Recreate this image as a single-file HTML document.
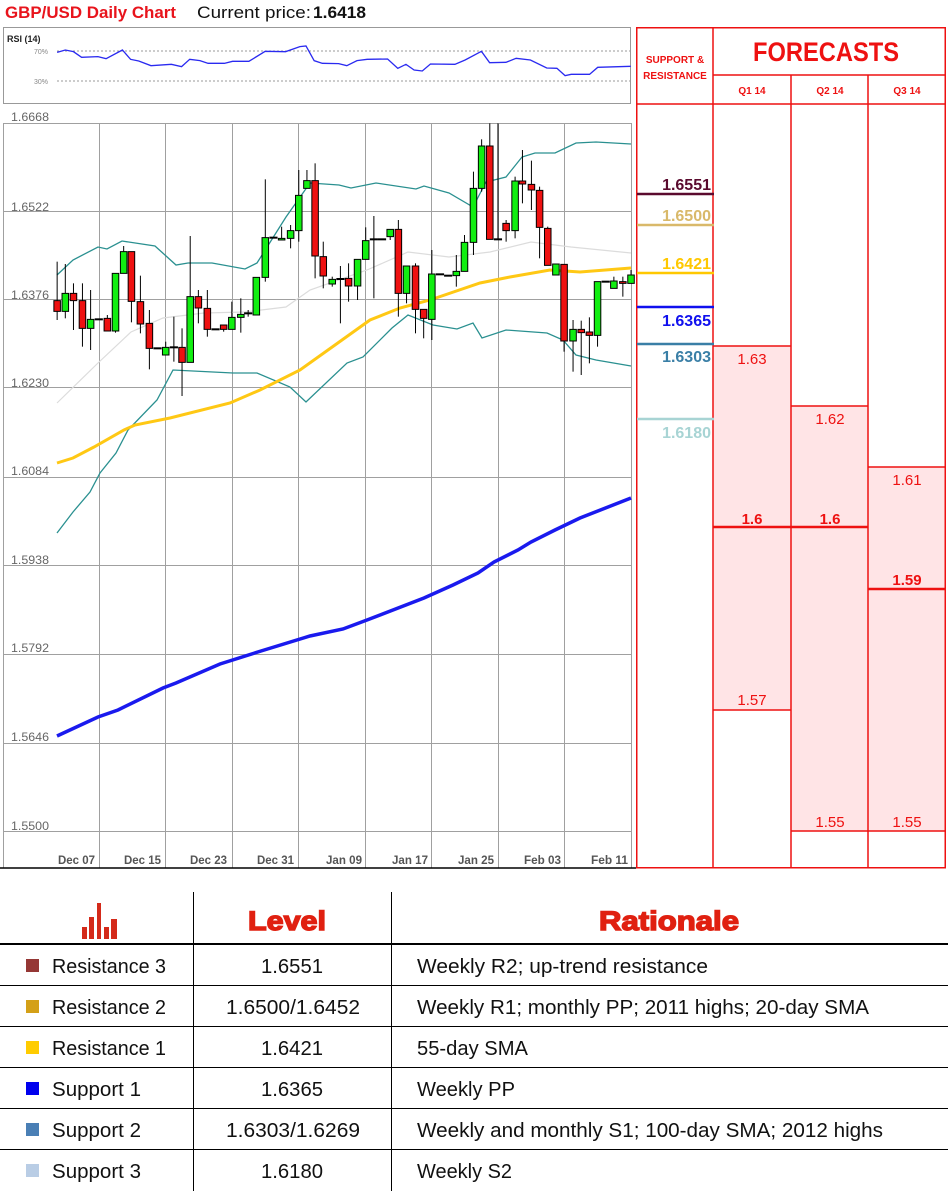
<!DOCTYPE html>
<html><head><meta charset="utf-8"><style>
html,body{margin:0;padding:0;background:#fff;}
svg{display:block;font-family:"Liberation Sans",sans-serif;}
</style></head><body>
<svg width="948" height="1191" viewBox="0 0 948 1191" xmlns="http://www.w3.org/2000/svg">
<rect width="948" height="1191" fill="#fff"/>
<!-- title -->
<text x="5" y="18" font-size="17" font-weight="bold" fill="#e8141c" textLength="171" lengthAdjust="spacingAndGlyphs">GBP/USD Daily Chart</text>
<text x="197" y="18" font-size="17" fill="#111" textLength="114" lengthAdjust="spacingAndGlyphs">Current price:</text>
<text x="313" y="18" font-size="17" font-weight="bold" fill="#111" textLength="53" lengthAdjust="spacingAndGlyphs">1.6418</text>

<!-- RSI panel -->
<rect x="3.5" y="27.5" width="627" height="76" fill="#fff" stroke="#999"/>
<text x="7" y="42" font-size="9" font-weight="bold" fill="#222">RSI (14)</text>
<text x="34" y="54" font-size="7" fill="#888">70%</text>
<text x="34" y="84" font-size="7" fill="#888">30%</text>
<line x1="57" y1="51" x2="630" y2="51" stroke="#777" stroke-dasharray="2,2" stroke-width="0.8"/>
<line x1="57" y1="81" x2="630" y2="81" stroke="#777" stroke-dasharray="2,2" stroke-width="0.8"/>
<g transform="scale(0.408,0.3333)">
<polyline fill="none" stroke="#2a2af0" stroke-width="1.3" vector-effect="non-scaling-stroke" points="140,157 160,150 180,155 200,172 240,170 260,176 300,150 320,178 340,183 370,197 420,193 445,200 465,178 490,182 510,190 550,190 570,184 610,184 650,154 700,155 735,140 750,138 770,182 790,190 830,191 850,197 875,182 900,178 950,177 975,205 995,193 1015,210 1035,213 1055,192 1115,193 1140,180 1180,154 1200,188 1240,187 1265,175 1300,180 1340,204 1365,205 1385,227 1400,223 1445,223 1465,202 1546,199"/>
</g>

<!-- main chart grid -->
<g stroke="#a0a0a0" stroke-width="1">
<line x1="3" y1="123.5" x2="631" y2="123.5"/>
<line x1="3" y1="211.5" x2="631" y2="211.5"/>
<line x1="3" y1="299.5" x2="631" y2="299.5"/>
<line x1="3" y1="387.5" x2="631" y2="387.5"/>
<line x1="3" y1="477.5" x2="631" y2="477.5"/>
<line x1="3" y1="565.5" x2="631" y2="565.5"/>
<line x1="3" y1="654.5" x2="631" y2="654.5"/>
<line x1="3" y1="743.5" x2="631" y2="743.5"/>
<line x1="3" y1="831.5" x2="631" y2="831.5"/>
<line x1="99.5" y1="123" x2="99.5" y2="868"/>
<line x1="165.5" y1="123" x2="165.5" y2="868"/>
<line x1="232.5" y1="123" x2="232.5" y2="868"/>
<line x1="298.5" y1="123" x2="298.5" y2="868"/>
<line x1="365.5" y1="123" x2="365.5" y2="868"/>
<line x1="431.5" y1="123" x2="431.5" y2="868"/>
<line x1="498.5" y1="123" x2="498.5" y2="868"/>
<line x1="564.5" y1="123" x2="564.5" y2="868"/>
<line x1="3.5" y1="123" x2="3.5" y2="868"/>
<line x1="631.5" y1="123" x2="631.5" y2="868"/>
</g>
<g font-size="12" fill="#666">
<text x="11" y="121" textLength="38" lengthAdjust="spacingAndGlyphs">1.6668</text>
<text x="11" y="211" textLength="38" lengthAdjust="spacingAndGlyphs">1.6522</text>
<text x="11" y="299" textLength="38" lengthAdjust="spacingAndGlyphs">1.6376</text>
<text x="11" y="387" textLength="38" lengthAdjust="spacingAndGlyphs">1.6230</text>
<text x="11" y="475" textLength="38" lengthAdjust="spacingAndGlyphs">1.6084</text>
<text x="11" y="564" textLength="38" lengthAdjust="spacingAndGlyphs">1.5938</text>
<text x="11" y="652" textLength="38" lengthAdjust="spacingAndGlyphs">1.5792</text>
<text x="11" y="741" textLength="38" lengthAdjust="spacingAndGlyphs">1.5646</text>
<text x="11" y="830" textLength="38" lengthAdjust="spacingAndGlyphs">1.5500</text>
</g>
<g font-size="12" font-weight="bold" fill="#555">
<text x="58" y="864" textLength="37" lengthAdjust="spacingAndGlyphs">Dec 07</text>
<text x="124" y="864" textLength="37" lengthAdjust="spacingAndGlyphs">Dec 15</text>
<text x="190" y="864" textLength="37" lengthAdjust="spacingAndGlyphs">Dec 23</text>
<text x="257" y="864" textLength="37" lengthAdjust="spacingAndGlyphs">Dec 31</text>
<text x="326" y="864" textLength="36" lengthAdjust="spacingAndGlyphs">Jan 09</text>
<text x="392" y="864" textLength="36" lengthAdjust="spacingAndGlyphs">Jan 17</text>
<text x="458" y="864" textLength="36" lengthAdjust="spacingAndGlyphs">Jan 25</text>
<text x="524" y="864" textLength="37" lengthAdjust="spacingAndGlyphs">Feb 03</text>
<text x="591" y="864" textLength="37" lengthAdjust="spacingAndGlyphs">Feb 11</text>
</g>
<line x1="0" y1="868" x2="636" y2="868" stroke="#000" stroke-width="1.5"/>

<!-- indicator lines -->
<polyline fill="none" stroke="#dcdcdc" stroke-width="1.2" points="57,403 98,363 131,332 163,318 204,313 245,312 286,307 310,290 367,270 408,252 449,257 490,252 531,242 571,247 631,253"/>
<polyline fill="none" stroke="#2a9090" stroke-width="1.3" points="57,275 73,260 98,247 107,249 122,241 155,246 176,265 188,263 212,263 245,269 257,263 286,217 310,183 339,185 351,188 376,183 416,189 424,186 449,193 473,207 486,182 506,177 522,157 535,153 555,153 576,143 596,142 631,144"/>
<polyline fill="none" stroke="#2a9090" stroke-width="1.3" points="57,533 73,512 90,492 100,473 116,453 128,430 157,400 173,370 233,373 257,373 290,387 306,402 347,363 363,357 392,328 408,315 433,325 457,329 473,323 482,338 506,330 547,333 563,340 576,355 596,360 631,366"/>
<polyline fill="none" stroke="#ffc814" stroke-width="3" points="57,463 73,458 94,447 124,430 135,425 170,418 230,403 260,390 300,370 335,345 370,320 400,308 430,300 480,283 510,277 550,270 580,272 631,268"/>
<polyline fill="none" stroke="#1a1aee" stroke-width="3.5" points="57,736 98,717 118,710 163,688 176,683 220,664 261,651 310,636 343,629 367,620 424,598 453,585 478,573 494,562 518,550 531,542 555,530 580,518 631,498"/>

<!-- candles (zoom coords) -->
<g transform="translate(0,110) scale(0.40816,0.33333)" stroke="#000">
<g stroke-width="1" fill="none">
<line x1="140" y1="455" x2="140" y2="630" vector-effect="non-scaling-stroke"/>
<line x1="160" y1="462" x2="160" y2="625" vector-effect="non-scaling-stroke"/>
<line x1="180" y1="520" x2="180" y2="660" vector-effect="non-scaling-stroke"/>
<line x1="202" y1="520" x2="202" y2="710" vector-effect="non-scaling-stroke"/>
<line x1="222" y1="540" x2="222" y2="720" vector-effect="non-scaling-stroke"/>
<line x1="263" y1="615" x2="263" y2="663" vector-effect="non-scaling-stroke"/>
<line x1="283" y1="490" x2="283" y2="668" vector-effect="non-scaling-stroke"/>
<line x1="303" y1="408" x2="303" y2="490" vector-effect="non-scaling-stroke"/>
<line x1="322" y1="425" x2="322" y2="637" vector-effect="non-scaling-stroke"/>
<line x1="344" y1="497" x2="344" y2="670" vector-effect="non-scaling-stroke"/>
<line x1="366" y1="600" x2="366" y2="778" vector-effect="non-scaling-stroke"/>
<line x1="406" y1="695" x2="406" y2="735" vector-effect="non-scaling-stroke"/>
<line x1="426" y1="620" x2="426" y2="755" vector-effect="non-scaling-stroke"/>
<line x1="446" y1="655" x2="446" y2="858" vector-effect="non-scaling-stroke"/>
<line x1="466" y1="378" x2="466" y2="757" vector-effect="non-scaling-stroke"/>
<line x1="486" y1="540" x2="486" y2="640" vector-effect="non-scaling-stroke"/>
<line x1="508" y1="540" x2="508" y2="680" vector-effect="non-scaling-stroke"/>
<line x1="548" y1="645" x2="548" y2="665" vector-effect="non-scaling-stroke"/>
<line x1="568" y1="575" x2="568" y2="658" vector-effect="non-scaling-stroke"/>
<line x1="590" y1="565" x2="590" y2="668" vector-effect="non-scaling-stroke"/>
<line x1="608" y1="600" x2="608" y2="620" vector-effect="non-scaling-stroke"/>
<line x1="628" y1="502" x2="628" y2="615" vector-effect="non-scaling-stroke"/>
<line x1="650" y1="208" x2="650" y2="515" vector-effect="non-scaling-stroke"/>
<line x1="690" y1="350" x2="690" y2="390" vector-effect="non-scaling-stroke"/>
<line x1="712" y1="345" x2="712" y2="415" vector-effect="non-scaling-stroke"/>
<line x1="732" y1="180" x2="732" y2="395" vector-effect="non-scaling-stroke"/>
<line x1="752" y1="180" x2="752" y2="235" vector-effect="non-scaling-stroke"/>
<line x1="772" y1="160" x2="772" y2="505" vector-effect="non-scaling-stroke"/>
<line x1="792" y1="395" x2="792" y2="535" vector-effect="non-scaling-stroke"/>
<line x1="814" y1="500" x2="814" y2="530" vector-effect="non-scaling-stroke"/>
<line x1="834" y1="468" x2="834" y2="640" vector-effect="non-scaling-stroke"/>
<line x1="854" y1="460" x2="854" y2="575" vector-effect="non-scaling-stroke"/>
<line x1="876" y1="448" x2="876" y2="570" vector-effect="non-scaling-stroke"/>
<line x1="896" y1="352" x2="896" y2="448" vector-effect="non-scaling-stroke"/>
<line x1="916" y1="318" x2="916" y2="565" vector-effect="non-scaling-stroke"/>
<line x1="956" y1="358" x2="956" y2="390" vector-effect="non-scaling-stroke"/>
<line x1="976" y1="330" x2="976" y2="620" vector-effect="non-scaling-stroke"/>
<line x1="996" y1="468" x2="996" y2="580" vector-effect="non-scaling-stroke"/>
<line x1="1018" y1="460" x2="1018" y2="670" vector-effect="non-scaling-stroke"/>
<line x1="1038" y1="598" x2="1038" y2="685" vector-effect="non-scaling-stroke"/>
<line x1="1058" y1="420" x2="1058" y2="690" vector-effect="non-scaling-stroke"/>
<line x1="1118" y1="435" x2="1118" y2="530" vector-effect="non-scaling-stroke"/>
<line x1="1138" y1="375" x2="1138" y2="484" vector-effect="non-scaling-stroke"/>
<line x1="1160" y1="185" x2="1160" y2="435" vector-effect="non-scaling-stroke"/>
<line x1="1180" y1="88" x2="1180" y2="245" vector-effect="non-scaling-stroke"/>
<line x1="1200" y1="40" x2="1200" y2="388" vector-effect="non-scaling-stroke"/>
<line x1="1220" y1="40" x2="1220" y2="388" vector-effect="non-scaling-stroke"/>
<line x1="1240" y1="330" x2="1240" y2="395" vector-effect="non-scaling-stroke"/>
<line x1="1262" y1="200" x2="1262" y2="385" vector-effect="non-scaling-stroke"/>
<line x1="1280" y1="120" x2="1280" y2="280" vector-effect="non-scaling-stroke"/>
<line x1="1302" y1="152" x2="1302" y2="300" vector-effect="non-scaling-stroke"/>
<line x1="1322" y1="230" x2="1322" y2="445" vector-effect="non-scaling-stroke"/>
<line x1="1342" y1="350" x2="1342" y2="466" vector-effect="non-scaling-stroke"/>
<line x1="1382" y1="463" x2="1382" y2="725" vector-effect="non-scaling-stroke"/>
<line x1="1404" y1="630" x2="1404" y2="785" vector-effect="non-scaling-stroke"/>
<line x1="1424" y1="632" x2="1424" y2="795" vector-effect="non-scaling-stroke"/>
<line x1="1444" y1="622" x2="1444" y2="760" vector-effect="non-scaling-stroke"/>
<line x1="1464" y1="515" x2="1464" y2="710" vector-effect="non-scaling-stroke"/>
<line x1="1504" y1="500" x2="1504" y2="535" vector-effect="non-scaling-stroke"/>
<line x1="1526" y1="500" x2="1526" y2="560" vector-effect="non-scaling-stroke"/>
<line x1="1546" y1="480" x2="1546" y2="520" vector-effect="non-scaling-stroke"/>
<line x1="232" y1="628" x2="252" y2="628" vector-effect="non-scaling-stroke" stroke-width="2"/>
<line x1="376" y1="715" x2="396" y2="715" vector-effect="non-scaling-stroke" stroke-width="2"/>
<line x1="416" y1="712" x2="436" y2="712" vector-effect="non-scaling-stroke" stroke-width="2"/>
<line x1="518" y1="658" x2="538" y2="658" vector-effect="non-scaling-stroke" stroke-width="2"/>
<line x1="598" y1="610" x2="618" y2="610" vector-effect="non-scaling-stroke" stroke-width="2"/>
<line x1="660" y1="383" x2="680" y2="383" vector-effect="non-scaling-stroke" stroke-width="2"/>
<line x1="824" y1="507" x2="844" y2="507" vector-effect="non-scaling-stroke" stroke-width="2"/>
<line x1="906" y1="388" x2="926" y2="388" vector-effect="non-scaling-stroke" stroke-width="2"/>
<line x1="926" y1="388" x2="946" y2="388" vector-effect="non-scaling-stroke" stroke-width="2"/>
<line x1="1068" y1="493" x2="1088" y2="493" vector-effect="non-scaling-stroke" stroke-width="2"/>
<line x1="1088" y1="497" x2="1108" y2="497" vector-effect="non-scaling-stroke" stroke-width="2"/>
<line x1="1210" y1="388" x2="1230" y2="388" vector-effect="non-scaling-stroke" stroke-width="2"/>
<line x1="1474" y1="515" x2="1494" y2="515" vector-effect="non-scaling-stroke" stroke-width="2"/>
</g>
<g fill="#ee1111">
<rect x="132" y="572" width="16" height="32" vector-effect="non-scaling-stroke"/>
<rect x="172" y="550" width="16" height="22" vector-effect="non-scaling-stroke"/>
<rect x="194" y="572" width="16" height="83" vector-effect="non-scaling-stroke"/>
<rect x="255" y="625" width="16" height="38" vector-effect="non-scaling-stroke"/>
<rect x="314" y="425" width="16" height="149" vector-effect="non-scaling-stroke"/>
<rect x="336" y="575" width="16" height="67" vector-effect="non-scaling-stroke"/>
<rect x="358" y="640" width="16" height="75" vector-effect="non-scaling-stroke"/>
<rect x="438" y="712" width="16" height="45" vector-effect="non-scaling-stroke"/>
<rect x="478" y="560" width="16" height="34" vector-effect="non-scaling-stroke"/>
<rect x="500" y="595" width="16" height="63" vector-effect="non-scaling-stroke"/>
<rect x="540" y="645" width="16" height="13" vector-effect="non-scaling-stroke"/>
<rect x="764" y="212" width="16" height="226" vector-effect="non-scaling-stroke"/>
<rect x="784" y="440" width="16" height="58" vector-effect="non-scaling-stroke"/>
<rect x="846" y="505" width="16" height="23" vector-effect="non-scaling-stroke"/>
<rect x="968" y="358" width="16" height="192" vector-effect="non-scaling-stroke"/>
<rect x="1010" y="468" width="16" height="130" vector-effect="non-scaling-stroke"/>
<rect x="1030" y="598" width="16" height="27" vector-effect="non-scaling-stroke"/>
<rect x="1192" y="108" width="16" height="280" vector-effect="non-scaling-stroke"/>
<rect x="1232" y="340" width="16" height="22" vector-effect="non-scaling-stroke"/>
<rect x="1272" y="213" width="16" height="9" vector-effect="non-scaling-stroke"/>
<rect x="1294" y="223" width="16" height="17" vector-effect="non-scaling-stroke"/>
<rect x="1314" y="241" width="16" height="111" vector-effect="non-scaling-stroke"/>
<rect x="1334" y="355" width="16" height="111" vector-effect="non-scaling-stroke"/>
<rect x="1374" y="463" width="16" height="230" vector-effect="non-scaling-stroke"/>
<rect x="1416" y="658" width="16" height="10" vector-effect="non-scaling-stroke"/>
<rect x="1436" y="666" width="16" height="10" vector-effect="non-scaling-stroke"/>
<rect x="1518" y="515" width="16" height="5" vector-effect="non-scaling-stroke"/>
</g>
<g fill="#11ee11">
<rect x="152" y="550" width="16" height="54" vector-effect="non-scaling-stroke"/>
<rect x="214" y="628" width="16" height="27" vector-effect="non-scaling-stroke"/>
<rect x="275" y="490" width="16" height="173" vector-effect="non-scaling-stroke"/>
<rect x="295" y="425" width="16" height="65" vector-effect="non-scaling-stroke"/>
<rect x="398" y="712" width="16" height="23" vector-effect="non-scaling-stroke"/>
<rect x="458" y="560" width="16" height="197" vector-effect="non-scaling-stroke"/>
<rect x="560" y="622" width="16" height="36" vector-effect="non-scaling-stroke"/>
<rect x="582" y="613" width="16" height="9" vector-effect="non-scaling-stroke"/>
<rect x="620" y="502" width="16" height="113" vector-effect="non-scaling-stroke"/>
<rect x="642" y="383" width="16" height="119" vector-effect="non-scaling-stroke"/>
<rect x="682" y="385" width="16" height="5" vector-effect="non-scaling-stroke"/>
<rect x="704" y="362" width="16" height="23" vector-effect="non-scaling-stroke"/>
<rect x="724" y="256" width="16" height="106" vector-effect="non-scaling-stroke"/>
<rect x="744" y="212" width="16" height="23" vector-effect="non-scaling-stroke"/>
<rect x="806" y="508" width="16" height="14" vector-effect="non-scaling-stroke"/>
<rect x="868" y="448" width="16" height="80" vector-effect="non-scaling-stroke"/>
<rect x="888" y="392" width="16" height="56" vector-effect="non-scaling-stroke"/>
<rect x="948" y="358" width="16" height="22" vector-effect="non-scaling-stroke"/>
<rect x="988" y="468" width="16" height="82" vector-effect="non-scaling-stroke"/>
<rect x="1050" y="492" width="16" height="136" vector-effect="non-scaling-stroke"/>
<rect x="1110" y="484" width="16" height="13" vector-effect="non-scaling-stroke"/>
<rect x="1130" y="397" width="16" height="87" vector-effect="non-scaling-stroke"/>
<rect x="1152" y="235" width="16" height="162" vector-effect="non-scaling-stroke"/>
<rect x="1172" y="108" width="16" height="127" vector-effect="non-scaling-stroke"/>
<rect x="1254" y="213" width="16" height="149" vector-effect="non-scaling-stroke"/>
<rect x="1354" y="462" width="16" height="33" vector-effect="non-scaling-stroke"/>
<rect x="1396" y="658" width="16" height="35" vector-effect="non-scaling-stroke"/>
<rect x="1456" y="515" width="16" height="161" vector-effect="non-scaling-stroke"/>
<rect x="1496" y="513" width="16" height="22" vector-effect="non-scaling-stroke"/>
<rect x="1538" y="495" width="16" height="25" vector-effect="non-scaling-stroke"/>
</g>
</g>

<!-- right forecast panel -->
<rect x="713" y="346" width="78" height="364" fill="#ffe4e6"/>
<rect x="791" y="406" width="77" height="425" fill="#ffe4e6"/>
<rect x="868" y="467" width="78" height="364" fill="#ffe4e6"/>
<g stroke="#ee1111" stroke-width="1.5" fill="none">
<rect x="636.75" y="27.75" width="308.5" height="840"/>
<line x1="713" y1="27" x2="713" y2="868"/>
<line x1="791" y1="75" x2="791" y2="868"/>
<line x1="868" y1="75" x2="868" y2="868"/>
<line x1="713" y1="75" x2="946" y2="75"/>
<line x1="636" y1="104" x2="946" y2="104"/>
<line x1="713" y1="346" x2="791" y2="346"/>
<line x1="713" y1="710" x2="791" y2="710"/>
<line x1="791" y1="406" x2="868" y2="406"/>
<line x1="868" y1="467" x2="946" y2="467"/>
<line x1="791" y1="831" x2="946" y2="831"/>
</g>
<line x1="713" y1="527" x2="868" y2="527" stroke="#ee1111" stroke-width="2.5"/>
<line x1="868" y1="589" x2="946" y2="589" stroke="#ee1111" stroke-width="2.5"/>
<text x="675" y="63" font-size="10" font-weight="bold" fill="#ee1111" text-anchor="middle">SUPPORT &amp;</text>
<text x="675" y="79" font-size="10" font-weight="bold" fill="#ee1111" text-anchor="middle">RESISTANCE</text>
<text x="826" y="61" font-size="27" font-weight="bold" fill="#ee1111" text-anchor="middle" textLength="146" lengthAdjust="spacingAndGlyphs">FORECASTS</text>
<g font-size="10" font-weight="bold" fill="#ee1111" text-anchor="middle">
<text x="752" y="94">Q1 14</text>
<text x="830" y="94">Q2 14</text>
<text x="907" y="94">Q3 14</text>
</g>
<g font-size="15" fill="#ee1111" text-anchor="middle">
<text x="752" y="364">1.63</text>
<text x="830" y="424">1.62</text>
<text x="907" y="485">1.61</text>
<text x="752" y="705">1.57</text>
<text x="830" y="827">1.55</text>
<text x="907" y="827">1.55</text>
</g>
<g font-size="15" font-weight="bold" fill="#ee1111" text-anchor="middle">
<text x="752" y="524">1.6</text>
<text x="830" y="524">1.6</text>
<text x="907" y="585">1.59</text>
</g>
<line x1="637" y1="194" x2="714" y2="194" stroke="#5a0a2e" stroke-width="2.5"/>
<line x1="637" y1="225" x2="714" y2="225" stroke="#d9b96a" stroke-width="2.5"/>
<line x1="637" y1="273" x2="714" y2="273" stroke="#ffc800" stroke-width="2.5"/>
<line x1="637" y1="307" x2="714" y2="307" stroke="#1010ee" stroke-width="2.5"/>
<line x1="637" y1="344" x2="714" y2="344" stroke="#3a7fa6" stroke-width="2.5"/>
<line x1="637" y1="419" x2="714" y2="419" stroke="#a8d4d4" stroke-width="2.5"/>
<g font-size="16" font-weight="bold" text-anchor="end">
<text x="711" y="190" fill="#5a0a2e">1.6551</text>
<text x="711" y="221" fill="#d9b96a">1.6500</text>
<text x="711" y="269" fill="#ffc800">1.6421</text>
<text x="711" y="326" fill="#1010ee">1.6365</text>
<text x="711" y="362" fill="#3a7fa6">1.6303</text>
<text x="711" y="438" fill="#a8d4d4">1.6180</text>
</g>

<!-- bottom table -->
<g stroke="#000" stroke-width="1">
<line x1="193.5" y1="892" x2="193.5" y2="1191"/>
<line x1="391.5" y1="892" x2="391.5" y2="1191"/>
<line x1="0" y1="985.5" x2="948" y2="985.5"/>
<line x1="0" y1="1026.5" x2="948" y2="1026.5"/>
<line x1="0" y1="1067.5" x2="948" y2="1067.5"/>
<line x1="0" y1="1108.5" x2="948" y2="1108.5"/>
<line x1="0" y1="1149.5" x2="948" y2="1149.5"/>
</g>
<line x1="0" y1="944" x2="948" y2="944" stroke="#000" stroke-width="2"/>
<g fill="#d42a1a">
<rect x="82" y="927" width="5" height="12"/>
<rect x="89" y="917" width="5" height="22"/>
<rect x="97" y="903" width="4" height="36"/>
<rect x="104" y="927" width="5" height="12"/>
<rect x="111" y="919" width="6" height="20"/>
</g>
<text x="287" y="930" font-size="27" font-weight="bold" fill="#e02010" text-anchor="middle" stroke="#e02010" stroke-width="1.4" textLength="78" lengthAdjust="spacingAndGlyphs">Level</text>
<text x="669" y="930" font-size="27" font-weight="bold" fill="#e02010" text-anchor="middle" stroke="#e02010" stroke-width="1.4" textLength="140" lengthAdjust="spacingAndGlyphs">Rationale</text>
<rect x="26" y="959" width="13" height="13" fill="#953735"/>
<rect x="26" y="1000" width="13" height="13" fill="#d4a017"/>
<rect x="26" y="1041" width="13" height="13" fill="#ffcc00"/>
<rect x="26" y="1082" width="13" height="13" fill="#0000ee"/>
<rect x="26" y="1123" width="13" height="13" fill="#4a7fb5"/>
<rect x="26" y="1164" width="13" height="13" fill="#b9cde5"/>
<g font-size="20" fill="#111">
<text x="52" y="973" textLength="114" lengthAdjust="spacingAndGlyphs">Resistance 3</text>
<text x="52" y="1014" textLength="114" lengthAdjust="spacingAndGlyphs">Resistance 2</text>
<text x="52" y="1055" textLength="114" lengthAdjust="spacingAndGlyphs">Resistance 1</text>
<text x="52" y="1096" textLength="89" lengthAdjust="spacingAndGlyphs">Support 1</text>
<text x="52" y="1137" textLength="89" lengthAdjust="spacingAndGlyphs">Support 2</text>
<text x="52" y="1178" textLength="89" lengthAdjust="spacingAndGlyphs">Support 3</text>
<text x="261" y="973" textLength="62" lengthAdjust="spacingAndGlyphs">1.6551</text>
<text x="226" y="1014" textLength="134" lengthAdjust="spacingAndGlyphs">1.6500/1.6452</text>
<text x="261" y="1055" textLength="62" lengthAdjust="spacingAndGlyphs">1.6421</text>
<text x="261" y="1096" textLength="62" lengthAdjust="spacingAndGlyphs">1.6365</text>
<text x="226" y="1137" textLength="134" lengthAdjust="spacingAndGlyphs">1.6303/1.6269</text>
<text x="261" y="1178" textLength="62" lengthAdjust="spacingAndGlyphs">1.6180</text>
<text x="417" y="973" textLength="291" lengthAdjust="spacingAndGlyphs">Weekly R2; up-trend resistance</text>
<text x="417" y="1014" textLength="452" lengthAdjust="spacingAndGlyphs">Weekly R1; monthly PP; 2011 highs; 20-day SMA</text>
<text x="417" y="1055" textLength="111" lengthAdjust="spacingAndGlyphs">55-day SMA</text>
<text x="417" y="1096" textLength="98" lengthAdjust="spacingAndGlyphs">Weekly PP</text>
<text x="417" y="1137" textLength="466" lengthAdjust="spacingAndGlyphs">Weekly and monthly S1; 100-day SMA; 2012 highs</text>
<text x="417" y="1178" textLength="95" lengthAdjust="spacingAndGlyphs">Weekly S2</text>
</g>
</svg>
</body></html>
